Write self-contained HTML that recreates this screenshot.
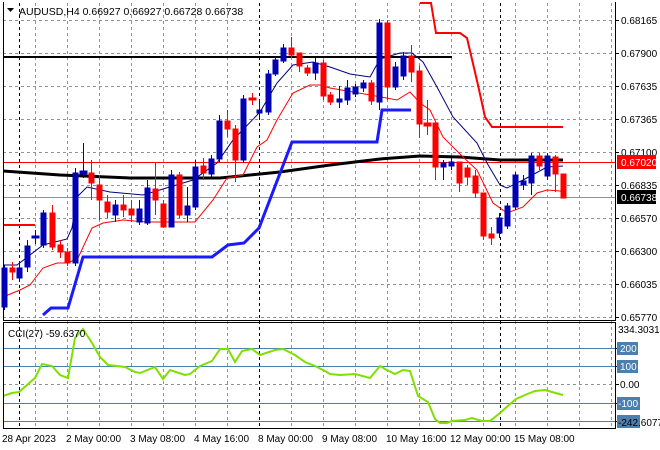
<!DOCTYPE html>
<html><head><meta charset="utf-8"><style>
body{margin:0;background:#fff;width:660px;height:450px;overflow:hidden}
svg{display:block;font-family:"Liberation Sans",sans-serif;font-size:10px}
</style></head><body>
<svg width="660" height="450" viewBox="0 0 660 450" xmlns="http://www.w3.org/2000/svg">
<rect width="660" height="450" fill="#fff"/>
<g stroke="#8a94a0" stroke-dasharray="3,3" stroke-width="1">
<line x1="3" y1="20.5" x2="615" y2="20.5"/><line x1="3" y1="53.5" x2="615" y2="53.5"/><line x1="3" y1="86.5" x2="615" y2="86.5"/><line x1="3" y1="119.5" x2="615" y2="119.5"/><line x1="3" y1="152.5" x2="615" y2="152.5"/><line x1="3" y1="185.5" x2="615" y2="185.5"/><line x1="3" y1="218.5" x2="615" y2="218.5"/><line x1="3" y1="251.5" x2="615" y2="251.5"/><line x1="3" y1="284.5" x2="615" y2="284.5"/><line x1="3" y1="317.5" x2="615" y2="317.5"/>
<line x1="3" y1="384.5" x2="615" y2="384.5"/>
</g>
<g stroke="#8a94a0" stroke-dasharray="3,3">
<path d="M35.5 3V428M67.5 3V428M99.5 3V428M131.5 3V428M163.5 3V428M195.5 3V428M227.5 3V428M291.5 3V428M323.5 3V428M355.5 3V428M387.5 3V428M419.5 3V428M451.5 3V428M483.5 3V428M515.5 3V428M547.5 3V428M579.5 3V428M611.5 3V428"/>
</g>
<g stroke="#000" stroke-dasharray="3,3"><path d="M19.5 3V428M259.5 3V428M500.5 3V428"/></g>
<g stroke="#4a7fb0" stroke-width="1"><path d="M3 348.5H615M3 366.5H615M3 403.5H615M3 421.5H615"/></g>
<line x1="3" y1="197.5" x2="615" y2="197.5" stroke="#8a94a0"/>
<line x1="3" y1="162.5" x2="615" y2="162.5" stroke="#ff0000"/>
<line x1="3" y1="57" x2="452" y2="57" stroke="#000" stroke-width="2"/>
<polyline fill="none" stroke="#000" stroke-width="3" points="3,171 60,175 130,178 220,178 280,172 330,165 380,159 420,156 460,157 500,160 563,160"/>
<polyline fill="none" stroke="#1a1aff" stroke-width="3" points="43,315 51,308 68,308 83,257 212,257 228,245 244,243 259,228 292,142 377,142 382,110 411,110"/>
<polyline fill="none" stroke="#ff0000" stroke-width="2" points="3,225 35,225"/>
<polyline fill="none" stroke="#ff0000" stroke-width="2" points="420,3 431,3 436,33 460,33 467,38 478,85 485,117 492,127 563,127"/>
<polyline fill="none" stroke="#000080" stroke-width="1" points="3,265 17,265 43,245 67,239 72,228 77,197 87,187 110,192 143,195 163,189 193,180 217,163 233,140 260,112 277,83 293,65 313,62 330,67 350,74 370,77 380,59 400,53 412,53 423,62 437,87 453,117 477,143 487,163 500,185 507,188 523,180 547,167 563,166"/>
<polyline fill="none" stroke="#ff0000" stroke-width="1" points="3,297 20,290 30,285 43,268 57,263 68,263 78,258 92,228 103,223 123,220 147,222 160,222 195,222 213,200 227,178 243,175 257,147 267,140 277,120 293,93 310,85 320,85 330,88 370,95 397,100 410,92 420,103 430,110 443,137 463,157 477,170 493,203 507,213 523,207 537,193 547,190 560,191 563,192"/>
<g stroke-width="1">
<g stroke="#0000b4" fill="#0000b4">
<path d="M4.5 265V310M19.5 262V282M27.5 240V272M35.5 230V244M43.5 210V248M75.5 168V266M83.5 143V178M115.5 200V222M139.5 200V225M147.5 180V225M171.5 170V227M187.5 187V222M195.5 160V210M211.5 155V178M219.5 115V162M243.5 95V163M259.5 100V118M268.5 70V115M275.5 56V76M283.5 44V63M315.5 58V80M339.5 86V108M347.5 80V105M355.5 84V97M363.5 80V92M379.5 19V110M395.5 62V90M403.5 52V80M443.5 160V180M451.5 158V170M499.5 213V238M507.5 203V229M515.5 172V210M523.5 175V190M531.5 153V195M547.5 153V180"/>
<rect x="2" y="268" width="5" height="39"/><rect x="17" y="268" width="5" height="10"/><rect x="25" y="246" width="5" height="21"/><rect x="32" y="236" width="7" height="2"/><rect x="41" y="213" width="5" height="32"/><rect x="73" y="173" width="5" height="90"/><rect x="80" y="171" width="7" height="3"/><rect x="113" y="205" width="5" height="10"/><rect x="137" y="209" width="5" height="13"/><rect x="145" y="188" width="5" height="35"/><rect x="169" y="175" width="5" height="52"/><rect x="185" y="206" width="5" height="9"/><rect x="193" y="167" width="5" height="40"/><rect x="209" y="159" width="5" height="15"/><rect x="217" y="121" width="5" height="38"/><rect x="241" y="99" width="5" height="61"/><rect x="257" y="110" width="5" height="3"/><rect x="266" y="74" width="5" height="38"/><rect x="273" y="60" width="5" height="14"/><rect x="281" y="48" width="5" height="13"/><rect x="313" y="63" width="5" height="10"/><rect x="337" y="99" width="5" height="3"/><rect x="345" y="88" width="5" height="12"/><rect x="353" y="87" width="5" height="7"/><rect x="361" y="83" width="5" height="5"/><rect x="377" y="23" width="5" height="79"/><rect x="393" y="67" width="5" height="20"/><rect x="401" y="56" width="5" height="20"/><rect x="441" y="163" width="5" height="4"/><rect x="449" y="162" width="5" height="4"/><rect x="497" y="218" width="5" height="15"/><rect x="505" y="206" width="5" height="20"/><rect x="513" y="175" width="5" height="32"/><rect x="521" y="181" width="5" height="4"/><rect x="529" y="156" width="5" height="27"/><rect x="545" y="156" width="5" height="20"/>
</g>
<g stroke="#ff0000" fill="#ff0000">
<path d="M12.5 262V280M52.5 205V250M60.5 240V258M67.5 248V266M91.5 160V200M99.5 175V220M107.5 195V218M123.5 195V217M131.5 200V222M155.5 162V215M163.5 200V227M179.5 172V218M203.5 158V180M227.5 110V137M235.5 125V182M252.5 93V105M291.5 37V58M299.5 53V72M307.5 65V76M323.5 60V100M330.5 92V105M371.5 80V105M387.5 20V100M411.5 45V82M419.5 66V138M427.5 100V135M435.5 123V180M459.5 162V192M467.5 165V185M475.5 170V198M483.5 193V240M491.5 227V245M539.5 153V170M555.5 155V192M563.5 174V198"/>
<rect x="10" y="268" width="5" height="4"/><rect x="50" y="213" width="5" height="34"/><rect x="58" y="245" width="5" height="7"/><rect x="65" y="252" width="5" height="11"/><rect x="89" y="173" width="5" height="10"/><rect x="97" y="185" width="5" height="15"/><rect x="105" y="202" width="5" height="10"/><rect x="121" y="205" width="5" height="5"/><rect x="129" y="209" width="5" height="6"/><rect x="153" y="189" width="5" height="11"/><rect x="161" y="204" width="5" height="23"/><rect x="177" y="175" width="5" height="40"/><rect x="201" y="166" width="5" height="7"/><rect x="225" y="121" width="5" height="8"/><rect x="233" y="129" width="5" height="31"/><rect x="249" y="98" width="7" height="2"/><rect x="289" y="48" width="5" height="7"/><rect x="297" y="53" width="5" height="13"/><rect x="305" y="68" width="5" height="5"/><rect x="321" y="63" width="5" height="33"/><rect x="328" y="95" width="5" height="7"/><rect x="369" y="83" width="5" height="18"/><rect x="385" y="23" width="5" height="64"/><rect x="409" y="56" width="5" height="16"/><rect x="417" y="71" width="5" height="53"/><rect x="424" y="123" width="7" height="3"/><rect x="433" y="123" width="5" height="44"/><rect x="457" y="162" width="5" height="21"/><rect x="465" y="168" width="5" height="9"/><rect x="473" y="176" width="5" height="17"/><rect x="481" y="193" width="5" height="43"/><rect x="489" y="234" width="5" height="4"/><rect x="537" y="156" width="5" height="10"/><rect x="553" y="157" width="5" height="17"/><rect x="561" y="174" width="5" height="24"/>
</g>
</g>
<polyline fill="none" stroke="#7fe000" stroke-width="2" points="3,396 12,393 19,392 35,378 42,364 52,366 60,375 68,378 75,338 83,329 92,343 100,357 108,365 125,367 135,372 140,373 155,367 163,379 170,370 185,375 190,374 200,366 212,361 220,349 228,349 235,362 242,351 252,349 260,355 275,350 283,349 295,355 305,362 315,366 325,371 330,374 340,375 355,374 370,378 380,366 385,369 395,374 403,370 410,371 418,396 428,402 435,419 440,423 447,423 452,421 465,420 472,418 482,421 490,421 500,413 510,404 516,399 525,395 535,391 545,390 552,392 563,395"/>
<g fill="none" stroke="#000" stroke-width="1">
<path d="M3.5 2V320.5H615.5V2"/>
<path d="M3.5 322.5H615.5V428.5H3.5Z"/>
</g>
<g stroke="#000"><path d="M615 20.5h4M615 53.5h4M615 86.5h4M615 119.5h4M615 152.5h4M615 185.5h4M615 218.5h4M615 251.5h4M615 284.5h4M615 317.5h4M615 348.5h4M615 366.5h4M615 384.5h4M615 403.5h4M615 421.5h4"/></g>
<path d="M7 8h7l-3.5 4z" fill="#000"/>
<text x="19" y="15" fill="#000" style="font-size:10.5px">AUDUSD,H4  0.66927 0.66927 0.66728 0.66738</text>
<text x="8" y="337" fill="#000">CCI(27) -59.6370</text>
<g fill="#000">
<text x="621" y="24">0.68165</text><text x="621" y="57">0.67900</text><text x="621" y="90">0.67635</text><text x="621" y="123">0.67365</text><text x="621" y="156">0.67100</text><text x="621" y="189">0.66835</text><text x="621" y="222">0.66570</text><text x="621" y="255">0.66300</text><text x="621" y="288">0.66035</text><text x="621" y="321">0.65770</text>
</g>
<rect x="617" y="155" width="39" height="14" fill="#ff0000"/><text x="621" y="166" fill="#fff">0.67020</text>
<rect x="617" y="190" width="39" height="14" fill="#000"/><text x="621" y="201" fill="#fff">0.66738</text>
<text x="618" y="333" fill="#000">334.3031</text>
<rect x="617" y="342" width="21" height="13" fill="#4a7fb0"/><text x="620" y="352" fill="#fff">200</text>
<rect x="617" y="360" width="21" height="13" fill="#4a7fb0"/><text x="620" y="370" fill="#fff">100</text>
<text x="620" y="388" fill="#000">0.00</text>
<rect x="617" y="397" width="23" height="13" fill="#4a7fb0"/><text x="618" y="407" fill="#fff">-100</text>
<rect x="617" y="415" width="23" height="13" fill="#4a7fb0"/><text x="618" y="426" fill="#000">-242.6077</text>
<g fill="#000">
<text x="2" y="442">28 Apr 2023</text><text x="66" y="442">2 May 00:00</text><text x="130" y="442">3 May 08:00</text><text x="194" y="442">4 May 16:00</text><text x="258" y="442">8 May 00:00</text><text x="322" y="442">9 May 08:00</text><text x="386" y="442">10 May 16:00</text><text x="450" y="442">12 May 00:00</text><text x="514" y="442">15 May 08:00</text>
</g>
</svg>
</body></html>
